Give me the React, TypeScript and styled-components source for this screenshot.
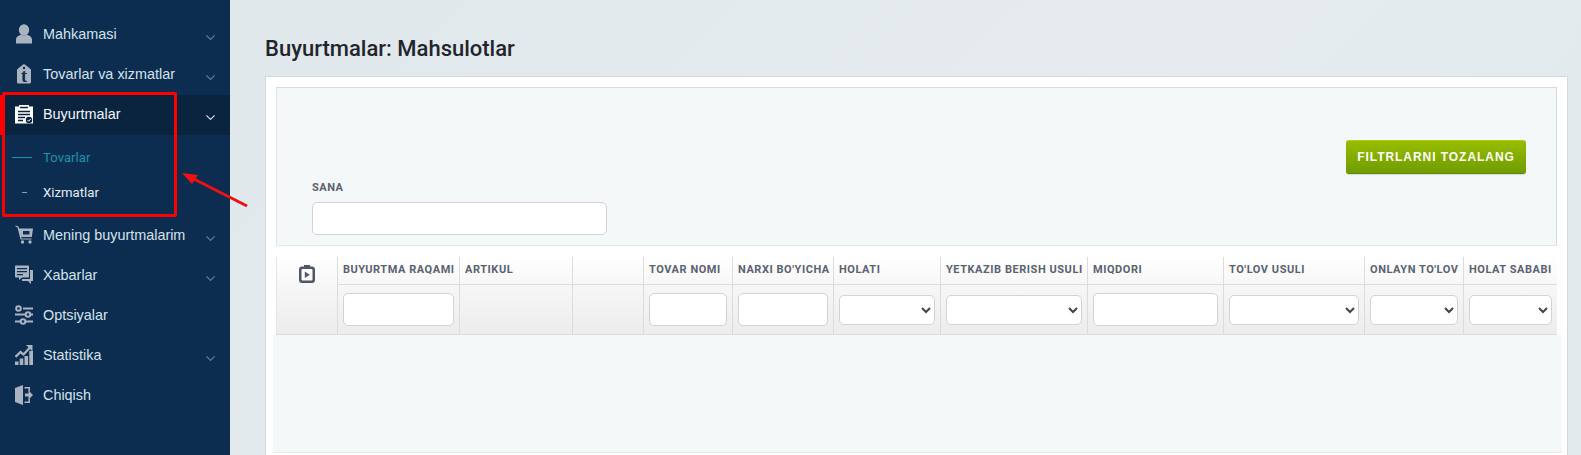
import React from "react";
import styled, { createGlobalStyle } from "styled-components";

const GlobalStyle = createGlobalStyle`
  html, body {
    margin: 0;
    padding: 0;
    height: 100%;
    overflow: hidden;
    background: #e2e9ec;
  }
  * { box-sizing: border-box; }
`;

const Page = styled.div`
  position: relative;
  display: flex;
  width: 1581px;
  height: 455px;
  overflow: hidden;
  font-family: "Liberation Sans", Arial, sans-serif;
`;

const Sidebar = styled.nav`
  flex: 0 0 230px;
  padding-top: 14px;
  background: #0c2d50;
`;

const MenuRow = styled.div<{ $active?: boolean }>`
  display: flex;
  align-items: center;
  height: 40px;
  padding-left: 15px;
  padding-right: 15px;
  padding-bottom: ${({ $active }) => ($active ? "2px" : "0")};
  margin-top: ${({ $active }) => ($active ? "1px" : "0")};
  background: ${({ $active }) => ($active ? "#0a2440" : "transparent")};
  box-shadow: ${({ $active }) => ($active ? "inset 5px 0 0 #fe0000" : "none")};
  color: ${({ $active }) => ($active ? "#f2f6fa" : "#d5e2ec")};
  font-size: 14.4px;
`;

const IconBox = styled.span`
  display: flex;
  flex: 0 0 18px;
  width: 18px;
  height: 20px;
  margin-right: 10px;
`;

const MenuLabel = styled.span`
  flex: 1;
  white-space: nowrap;
`;

const Chevron = styled.svg<{ $active?: boolean }>`
  width: 9px;
  height: 5px;
  margin-top: 6px;
  fill: none;
  stroke: ${({ $active }) => ($active ? "#dfe7ee" : "#6d8299")};
  stroke-width: 1.1;
`;

const SubMenu = styled.div`
  padding: 5px 0;
`;

const SubRow = styled.div<{ $current?: boolean }>`
  display: flex;
  align-items: center;
  height: 35px;
  color: ${({ $current }) => ($current ? "#1a93ad" : "#e4ecf2")};
  font-family: Roboto, sans-serif;
  font-size: 13.2px;
  font-weight: 400;
`;

const SubDash = styled.span<{ $current?: boolean }>`
  flex: 0 0 43px;
  height: 1px;
  &::before {
    content: "";
    display: block;
    height: 1px;
    margin-left: ${({ $current }) => ($current ? "12px" : "22px")};
    width: ${({ $current }) => ($current ? "20px" : "5px")};
    background: ${({ $current }) => ($current ? "#1a93ad" : "#8b9db0")};
  }
`;

const Main = styled.main`
  flex: 1;
  min-width: 0;
  padding: 0 13px 0 35px;
  background: linear-gradient(135deg, #e1e8eb 0%, #e5ebee 55%, #e1e9ec 100%);
`;

const Title = styled.h1`
  height: 76px;
  margin: 0;
  padding-top: 35px;
  color: #22252c;
  font-family: Roboto, sans-serif;
  font-size: 22px;
  font-weight: 500;
  line-height: 28px;
`;

const Panel = styled.section`
  height: 400px;
  padding: 10px;
  background: #fff;
  border: 1px solid #d3d9de;
`;

const FilterBox = styled.div`
  display: flex;
  justify-content: space-between;
  height: 159px;
  padding: 0 30px 10px 35px;
  background: #f4f8f9;
  border: 1px solid #d5dbe0;
  border-bottom-color: #e2e8ea;
  border-left-color: #dfe5e8;
`;

const Field = styled.div`
  align-self: flex-end;
  width: 295px;
`;

const FieldLabel = styled.label`
  display: block;
  margin-bottom: 8px;
  color: #5a6170;
  font-family: Roboto, sans-serif;
  font-size: 11px;
  font-weight: 700;
  letter-spacing: 0.5px;
  line-height: 12px;
`;

const TextInput = styled.input`
  display: block;
  width: 100%;
  height: 33px;
  padding: 0 8px;
  background: #fff;
  border: 1px solid #cfd4d9;
  border-radius: 5px;
  outline: none;
`;

const ClearButton = styled.button`
  align-self: flex-start;
  width: 180px;
  height: 34px;
  margin-top: 52px;
  padding: 0;
  background: linear-gradient(#97bd00, #6f9c00);
  border: 0;
  border-top: 1px solid #a9cc0c;
  border-bottom: 1px solid #5f8800;
  border-radius: 3px;
  box-shadow: 0 1px 1px rgba(0, 0, 0, 0.12);
  color: #fff;
  font-family: "Liberation Sans", Arial, sans-serif;
  font-size: 12px;
  font-weight: 700;
  letter-spacing: 0.95px;
`;

const Table = styled.table`
  width: 1281px;
  margin-top: 11px;
  border-collapse: separate;
  border-spacing: 0;
  table-layout: fixed;
  background: linear-gradient(#ffffff 0%, #f7f7f7 35%, #ececec 100%);
`;

const HeadCell = styled.th`
  height: 28px;
  padding: 0 0 2px 5px;
  border-bottom: 1px solid #dcdcdc;
  border-left: 1px solid #dcdcdc;
  color: #5a6170;
  font-family: Roboto, sans-serif;
  font-size: 11px;
  font-weight: 700;
  letter-spacing: 0.55px;
  text-align: left;
  white-space: nowrap;
  overflow: hidden;
`;

const IconCell = styled.th`
  padding-top: 8px;
  border-bottom: 1px solid #dcdcdc;
  border-left: 1px solid #e4e4e4;
  text-align: center;
  vertical-align: top;
`;

const FilterCell = styled.td`
  height: 50px;
  padding: 0 5px;
  border-bottom: 1px solid #dcdcdc;
  border-left: 1px solid #dcdcdc;
`;

const SelectInput = styled.select`
  display: block;
  width: 100%;
  height: 30px;
  margin-top: 1px;
  background-color: #fff;
  border: 1px solid #cfd4d9;
  border-radius: 5px;
  color: #444;
  outline: none;
`;

const EmptyRows = styled.div`
  height: 118px;
  margin: 0 -5px 0 -3px;
  background: #f4f8f9;
  border-bottom: 1px solid #e6eaec;
`;

const Highlight = styled.div`
  position: absolute;
  left: 2px;
  top: 92px;
  width: 175px;
  height: 125px;
  border: 3px solid #fe0000;
  border-radius: 2px;
  pointer-events: none;
`;

const Arrow = styled.svg`
  position: absolute;
  left: 175px;
  top: 165px;
  width: 80px;
  height: 50px;
  pointer-events: none;
`;

const PersonIcon = () => (
  <svg width="18" height="20" viewBox="0 0 18 20" fill="#a9b4c0">
    <ellipse cx="9" cy="6" rx="5.200" ry="5.800" />
    <path d="M1 19.500v-4C1 12.800 4 11.500 6 10.800c1.800 1 4.200 1 6 0 2 .7 5 2 5 4.700v4z" />
  </svg>
);

const TagIcon = () => (
  <svg width="18" height="20" viewBox="0 0 18 20">
    <path fill="#a9b4c0" fillRule="evenodd" d="M9 0l3.500 2.500L16 5.500V18c0 .9-.6 1.500-1.500 1.500h-11C2.600 19.500 2 18.900 2 18V5.500l3.500-3zM9 2.800a1.200 1.200 0 100 2.400 1.200 1.200 0 000-2.400z" />
    <text x="9" y="17.500" textAnchor="middle" fill="#0c2d50" fontFamily="'Liberation Serif', serif" fontWeight="700" fontSize="18">t</text>
  </svg>
);

const ClipboardIcon = () => (
  <svg width="18" height="20" viewBox="0 0 18 20">
    <path fill="#fff" d="M0 2.500h4V1h10v1.500h4V19.500H0z" />
    <path stroke="#0a2440" strokeWidth="1.300" d="M5 3.500h8M3 7.500h12M3 10.500h12M3 13.500h7M3 16.500h5" />
    <circle cx="14" cy="16" r="3.200" fill="#0a2440" />
    <path stroke="#fff" strokeWidth="1" fill="none" d="M12.500 16l1.200 1.200 2-2.300" />
  </svg>
);

const CartIcon = () => (
  <svg width="18" height="20" viewBox="0 0 18 20" fill="#a9b4c0">
    <path stroke="#a9b4c0" strokeWidth="1.200" fill="none" d="M0.500 1l2.500 1 3 12h10.500" />
    <path fillRule="evenodd" d="M3.500 3.500H18l-1.200 8.500H5.500zM8 6v3.500h6.500V6z" />
    <circle cx="7.500" cy="17" r="1.700" />
    <circle cx="15" cy="17" r="1.700" />
  </svg>
);

const ChatIcon = () => (
  <svg width="18" height="20" viewBox="0 0 18 20" fill="#a9b4c0">
    <path fillRule="evenodd" d="M1 0.500h12c.6 0 1 .4 1 1v10c0 .6-.4 1-1 1H7l-3 2.500v-2.500H1c-.6 0-1-.4-1-1v-10c0-.6.4-1 1-1zM2 3v1.300h10V3zM2 6v1.300h10V6zM2 9v1.300h6V9z" />
    <path d="M15 5h2.500c.3 0 .5.2.5.500v10c0 .3-.2.500-.5.500H16v3l-3-3H7v-2h8z" />
  </svg>
);

const SlidersIcon = () => (
  <svg width="18" height="20" viewBox="0 0 18 20" fill="none" stroke="#a9b4c0" strokeWidth="2">
    <circle cx="3.500" cy="3.500" r="2.300" />
    <path d="M8 3.500h10M0 9.500h10M16 9.500h2M5 16.500H0M11 16.500h7" />
    <circle cx="13" cy="9.500" r="2.300" />
    <circle cx="8" cy="16.500" r="2.300" />
  </svg>
);

const ChartIcon = () => (
  <svg width="18" height="20" viewBox="0 0 18 20" fill="#a9b4c0">
    <path d="M0 16.500h3.500V20H0zM4.700 13.500h3.600V20H4.700zM9.500 11h3.600v9H9.500zM14.300 6H18v14h-3.700z" />
    <path stroke="#a9b4c0" strokeWidth="2.300" fill="none" d="M0.500 12l5-5 3 2.500 6.500-7" />
    <path d="M11 0h6.500v6.500z" />
  </svg>
);

const ExitIcon = () => (
  <svg width="18" height="20" viewBox="0 0 18 20" fill="#a9b4c0">
    <path d="M0 3l8-3v20l-8-3z" />
    <path d="M9.500 2H15v4.500h-1.500v-3h-4zM9.500 16.500h4v-3H15V18H9.500z" />
    <path d="M10 8.500h3.500V5.500L18 10l-4.500 4.500v-3H10z" />
  </svg>
);

const menuTop = [
  { label: "Mahkamasi", icon: <PersonIcon />, more: true },
  { label: "Tovarlar va xizmatlar", icon: <TagIcon />, more: true },
];

const menuBottom = [
  { label: "Mening buyurtmalarim", icon: <CartIcon />, more: true },
  { label: "Xabarlar", icon: <ChatIcon />, more: true },
  { label: "Optsiyalar", icon: <SlidersIcon />, more: false },
  { label: "Statistika", icon: <ChartIcon />, more: true },
  { label: "Chiqish", icon: <ExitIcon />, more: false },
];

const columns = [
  { title: "BUYURTMA RAQAMI", width: 122, filter: "input" },
  { title: "ARTIKUL", width: 113, filter: "" },
  { title: "", width: 71, filter: "" },
  { title: "TOVAR NOMI", width: 89, filter: "input" },
  { title: "NARXI BO'YICHA", width: 101, filter: "input" },
  { title: "HOLATI", width: 107, filter: "select" },
  { title: "YETKAZIB BERISH USULI", width: 147, filter: "select" },
  { title: "MIQDORI", width: 136, filter: "input" },
  { title: "TO'LOV USULI", width: 141, filter: "select" },
  { title: "ONLAYN TO'LOV", width: 99, filter: "select" },
  { title: "HOLAT SABABI", width: 94, filter: "select" },
];

const ChevronDown = ({ active }: { active?: boolean }) => (
  <Chevron $active={active} viewBox="0 0 9 5">
    <path d="M0.400 0.400L4.500 4.400L8.600 0.400" />
  </Chevron>
);

const Item = ({ label, icon, more }: { label: string; icon: React.ReactNode; more: boolean }) => (
  <MenuRow>
    <IconBox>{icon}</IconBox>
    <MenuLabel>{label}</MenuLabel>
    {more && <ChevronDown />}
  </MenuRow>
);

const App = () => {
  return (
    <Page>
      <GlobalStyle />
      <Sidebar>
        {menuTop.map((item) => (
          <Item key={item.label} {...item} />
        ))}
        <MenuRow $active>
          <IconBox>
            <ClipboardIcon />
          </IconBox>
          <MenuLabel>Buyurtmalar</MenuLabel>
          <ChevronDown active />
        </MenuRow>
        <SubMenu>
          <SubRow $current>
            <SubDash $current />
            Tovarlar
          </SubRow>
          <SubRow>
            <SubDash />
            Xizmatlar
          </SubRow>
        </SubMenu>
        {menuBottom.map((item) => (
          <Item key={item.label} {...item} />
        ))}
      </Sidebar>
      <Main>
        <Title>Buyurtmalar: Mahsulotlar</Title>
        <Panel>
          <FilterBox>
            <Field>
              <FieldLabel>SANA</FieldLabel>
              <TextInput />
            </Field>
            <ClearButton>FILTRLARNI TOZALANG</ClearButton>
          </FilterBox>
          <Table>
            <colgroup>
              <col width={61} />
              {columns.map((col) => (
                <col key={col.title || "blank"} width={col.width} />
              ))}
            </colgroup>
            <thead>
              <tr>
                <IconCell rowSpan={2}>
                  <svg width="16" height="18" viewBox="0 0 16 18">
                    <path fill="#4e5766" d="M5 0h6v1.500h2c1.700 0 3 1.300 3 3V15c0 1.700-1.300 3-3 3H3c-1.700 0-3-1.300-3-3V4.500c0-1.700 1.300-3 3-3h2z" />
                    <rect x="2.500" y="4" width="11" height="11.500" rx="1" fill="#fbfbfb" />
                    <path fill="#4e5766" d="M5.800 6.500l5 3.200-5 3.200z" />
                  </svg>
                </IconCell>
                {columns.map((col) => (
                  <HeadCell key={col.title || "blank"}>{col.title}</HeadCell>
                ))}
              </tr>
              <tr>
                {columns.map((col) => (
                  <FilterCell key={col.title || "blank"}>
                    {col.filter === "input" && <TextInput />}
                    {col.filter === "select" && (
                      <SelectInput>
                        <option value=""></option>
                      </SelectInput>
                    )}
                  </FilterCell>
                ))}
              </tr>
            </thead>
          </Table>
          <EmptyRows />
        </Panel>
      </Main>
      <Highlight />
      <Arrow viewBox="0 0 80 50">
        <path d="M72 41L15 12" stroke="#ee1111" strokeWidth="3" fill="none" />
        <path d="M7 8L23 10L17 19z" fill="#ee1111" />
      </Arrow>
    </Page>
  );
};

export default App;
